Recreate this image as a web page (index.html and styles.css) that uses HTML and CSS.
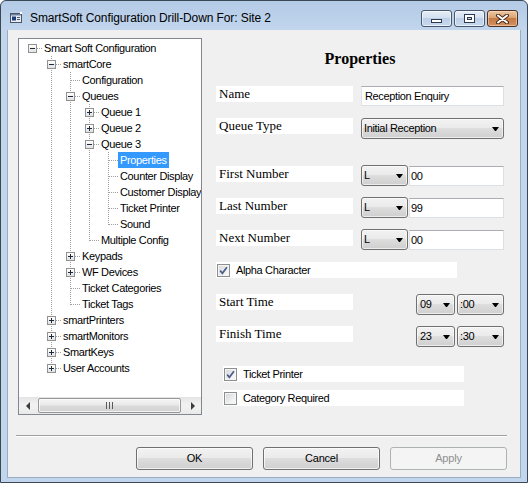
FILE: index.html
```html
<!DOCTYPE html>
<html>
<head>
<meta charset="utf-8">
<title>SmartSoft Configuration</title>
<link rel="stylesheet" href="styles.css">
</head>
<body>
<div class="window">
  <div class="titlebar">
    <svg class="appicon" width="16" height="16" viewBox="0 0 16 16">
      <rect x="2.5" y="3.5" width="11" height="9" fill="#e9eef5" stroke="#4a5568"/>
      <rect x="3" y="4" width="10" height="1.5" fill="#6d7f9c"/>
      <rect x="4" y="6.5" width="4" height="4" fill="#1f3c7a"/>
      <rect x="9" y="7" width="3" height="1" fill="#4a5568"/>
      <rect x="9" y="9" width="3" height="1" fill="#4a5568"/>
      <rect x="12" y="2" width="2" height="2" fill="#ffffff"/>
    </svg>
    <span class="title">SmartSoft Configuration Drill-Down For: Site 2</span>
    <div class="capbtns">
      <div class="capbtn"><span class="ico-min"></span></div>
      <div class="capbtn"><span class="ico-max"></span></div>
      <div class="capbtn close">
        <svg width="15" height="10" viewBox="0 0 15 10">
          <path d="M3 1.5 L12 8.5 M12 1.5 L3 8.5" stroke="#4a2a18" stroke-width="4" stroke-linecap="round"/>
          <path d="M3 1.5 L12 8.5 M12 1.5 L3 8.5" stroke="#ffffff" stroke-width="2" stroke-linecap="round"/>
        </svg>
      </div>
    </div>
  </div>

  <div class="client">
    <div class="main">
      <div class="tree">
        <div class="nodes">
          <div class="row"><span class="cell root"><span class="box minus"></span></span><span class="lbl">Smart Soft Configuration</span></div>
          <div class="row"><span class="cell"></span><span class="cell tee"><span class="box minus"></span></span><span class="lbl">smartCore</span></div>
          <div class="row"><span class="cell"></span><span class="cell line"></span><span class="cell tee"></span><span class="lbl">Configuration</span></div>
          <div class="row"><span class="cell"></span><span class="cell line"></span><span class="cell tee"><span class="box minus"></span></span><span class="lbl">Queues</span></div>
          <div class="row"><span class="cell"></span><span class="cell line"></span><span class="cell line"></span><span class="cell tee"><span class="box plus"></span></span><span class="lbl">Queue 1</span></div>
          <div class="row"><span class="cell"></span><span class="cell line"></span><span class="cell line"></span><span class="cell tee"><span class="box plus"></span></span><span class="lbl">Queue 2</span></div>
          <div class="row"><span class="cell"></span><span class="cell line"></span><span class="cell line"></span><span class="cell tee"><span class="box minus"></span></span><span class="lbl">Queue 3</span></div>
          <div class="row"><span class="cell"></span><span class="cell line"></span><span class="cell line"></span><span class="cell line"></span><span class="cell tee"></span><span class="lbl selected">Properties</span></div>
          <div class="row"><span class="cell"></span><span class="cell line"></span><span class="cell line"></span><span class="cell line"></span><span class="cell tee"></span><span class="lbl">Counter Display</span></div>
          <div class="row"><span class="cell"></span><span class="cell line"></span><span class="cell line"></span><span class="cell line"></span><span class="cell tee"></span><span class="lbl">Customer Display</span></div>
          <div class="row"><span class="cell"></span><span class="cell line"></span><span class="cell line"></span><span class="cell line"></span><span class="cell tee"></span><span class="lbl">Ticket Printer</span></div>
          <div class="row"><span class="cell"></span><span class="cell line"></span><span class="cell line"></span><span class="cell line"></span><span class="cell elbow"></span><span class="lbl">Sound</span></div>
          <div class="row"><span class="cell"></span><span class="cell line"></span><span class="cell line"></span><span class="cell elbow"></span><span class="lbl">Multiple Config</span></div>
          <div class="row"><span class="cell"></span><span class="cell line"></span><span class="cell tee"><span class="box plus"></span></span><span class="lbl">Keypads</span></div>
          <div class="row"><span class="cell"></span><span class="cell line"></span><span class="cell tee"><span class="box plus"></span></span><span class="lbl">WF Devices</span></div>
          <div class="row"><span class="cell"></span><span class="cell line"></span><span class="cell tee"></span><span class="lbl">Ticket Categories</span></div>
          <div class="row"><span class="cell"></span><span class="cell line"></span><span class="cell elbow"></span><span class="lbl">Ticket Tags</span></div>
          <div class="row"><span class="cell"></span><span class="cell tee"><span class="box plus"></span></span><span class="lbl">smartPrinters</span></div>
          <div class="row"><span class="cell"></span><span class="cell tee"><span class="box plus"></span></span><span class="lbl">smartMonitors</span></div>
          <div class="row"><span class="cell"></span><span class="cell tee"><span class="box plus"></span></span><span class="lbl">SmartKeys</span></div>
          <div class="row"><span class="cell"></span><span class="cell elbow"><span class="box plus"></span></span><span class="lbl">User Accounts</span></div>
        </div>
        <div class="hscroll">
          <span class="sbtn"><span class="arr-left"></span></span>
          <span class="track"><span class="thumb"><span class="grip"></span></span></span>
          <span class="sbtn"><span class="arr-right"></span></span>
        </div>
      </div>

      <div class="panel">
        <div class="ptitle">Properties</div>

        <div class="frow r-name">
          <span class="flabel">Name</span>
          <span class="tbox wide">Reception Enquiry</span>
        </div>
        <div class="frow r-qtype">
          <span class="flabel">Queue Type</span>
          <span class="combo wide"><span class="ctext">Initial Reception</span><i class="arrow"></i></span>
        </div>
        <div class="frow r-num r-first">
          <span class="flabel">First Number</span>
          <span class="combo pre"><span class="ctext">L</span><i class="arrow"></i></span>
          <span class="tbox num">00</span>
        </div>
        <div class="frow r-num r-next1">
          <span class="flabel">Last Number</span>
          <span class="combo pre"><span class="ctext">L</span><i class="arrow"></i></span>
          <span class="tbox num">99</span>
        </div>
        <div class="frow r-num r-next1">
          <span class="flabel">Next Number</span>
          <span class="combo pre"><span class="ctext">L</span><i class="arrow"></i></span>
          <span class="tbox num">00</span>
        </div>
        <div class="check r-alpha">
          <span class="cbox"><svg width="11" height="11" viewBox="0 0 11 11"><path d="M2.2 5.6 L4.4 8.3 L8.9 2.2" fill="none" stroke="#4b5f8a" stroke-width="1.7"/></svg></span>
          <span class="ctxt">Alpha Character</span>
        </div>
        <div class="frow r-start">
          <span class="flabel">Start Time</span>
          <span class="combo hr"><span class="ctext">09</span><i class="arrow"></i></span>
          <span class="combo mn"><span class="ctext">:00</span><i class="arrow"></i></span>
        </div>
        <div class="frow r-next1">
          <span class="flabel">Finish Time</span>
          <span class="combo hr"><span class="ctext">23</span><i class="arrow"></i></span>
          <span class="combo mn"><span class="ctext">:30</span><i class="arrow"></i></span>
        </div>
        <div class="check r-ticket">
          <span class="cbox"><svg width="11" height="11" viewBox="0 0 11 11"><path d="M2.2 5.6 L4.4 8.3 L8.9 2.2" fill="none" stroke="#4b5f8a" stroke-width="1.7"/></svg></span>
          <span class="ctxt">Ticket Printer</span>
        </div>
        <div class="check r-cat">
          <span class="cbox"></span>
          <span class="ctxt">Category Required</span>
        </div>
      </div>
    </div>

    <div class="sep"></div>

    <div class="buttons">
      <span class="btn">OK</span>
      <span class="btn">Cancel</span>
      <span class="btn disabled">Apply</span>
    </div>
  </div>
</div>
</body>
</html>
```

FILE: styles.css
```css
html, body {
  margin: 0;
  padding: 0;
  background: #ffffff;
}
body {
  width: 528px;
  height: 483px;
  overflow: hidden;
  font-family: "Liberation Sans", Arial, sans-serif;
  font-size: 11px;
  color: #000;
}

/* ---------- window frame ---------- */
.window {
  width: 528px;
  height: 483px;
  box-sizing: border-box;
  border: 1px solid #3b4656;
  border-radius: 6px 6px 0 0;
  background: linear-gradient(#b4cbe6, #c1d5ed 29px, #c1d5ed);
  display: flex;
  flex-direction: column;
  overflow: hidden;
}
.titlebar {
  height: 29px;
  flex: none;
  display: flex;
  align-items: flex-start;
  padding: 0 9px 0 7px;
}
.appicon {
  margin-top: 9px;
  flex: none;
}
.title {
  margin-left: 6px;
  margin-top: 10px;
  font-size: 12px;
  line-height: 15px;
  letter-spacing: -0.1px;
  white-space: nowrap;
}
.capbtns {
  margin-left: auto;
  margin-top: 9px;
  display: flex;
  gap: 2px;
}
.capbtn {
  width: 31px;
  height: 17px;
  box-sizing: border-box;
  border: 1px solid #4a586c;
  border-radius: 3px;
  background: linear-gradient(#e6eef8, #d3e0f0 45%, #bccfe7 50%, #c9daef);
  box-shadow: inset 0 0 0 1px rgba(255,255,255,0.55);
  display: flex;
  align-items: center;
  justify-content: center;
}
.capbtn.close {
  border-color: #4f2f20;
  background: linear-gradient(#ebc8a6, #dba271 45%, #c47a45 50%, #d39160);
  box-shadow: inset 0 0 0 1px rgba(255,230,200,0.5);
}
.ico-min {
  width: 11px;
  height: 4px;
  box-sizing: border-box;
  border: 1px solid #2d3a4d;
  background: #fff;
  align-self: flex-end;
  margin-bottom: 3px;
}
.ico-max {
  width: 11px;
  height: 9px;
  box-sizing: border-box;
  border: 1px solid #2d3a4d;
  background:
    linear-gradient(#c8d8ec, #c8d8ec) center / 3px 1px no-repeat,
    linear-gradient(#2d3a4d, #2d3a4d) center / 5px 3px no-repeat,
    #fff;
}

/* ---------- client ---------- */
.client {
  flex: 1;
  margin: 0 6px 4px 6px;
  border: 1px solid #98acc4;
  border-top: 0;
  background: #f0f0f0;
  display: flex;
  flex-direction: column;
}
.main {
  display: flex;
  align-items: flex-start;
  padding: 8px 0 0 10px;
}

/* ---------- tree ---------- */
.tree {
  width: 184px;
  height: 377px;
  box-sizing: border-box;
  border: 1px solid #828790;
  background: #fff;
  display: flex;
  flex-direction: column;
  flex: none;
}
.nodes {
  flex: 1;
  overflow: hidden;
  padding: 1px 0 0 4px;
  letter-spacing: -0.35px;
}
.row {
  display: flex;
  height: 16px;
  white-space: nowrap;
}
.cell {
  --dv: repeating-linear-gradient(#a0a0a0 0 1px, transparent 1px 2px);
  --dh: repeating-linear-gradient(90deg, #a0a0a0 0 1px, transparent 1px 2px);
  width: 19px;
  height: 16px;
  flex: none;
  display: flex;
  align-items: center;
  justify-content: center;
}
.cell.line {
  background: var(--dv) 9px 0 / 1px 16px no-repeat;
}
.cell.tee {
  background: var(--dh) 10px 8px / 9px 1px no-repeat, var(--dv) 9px 0 / 1px 16px no-repeat;
}
.cell.elbow {
  background: var(--dh) 10px 8px / 9px 1px no-repeat, var(--dv) 9px 0 / 1px 9px no-repeat;
}
.cell.root {
  background: var(--dh) 10px 8px / 9px 1px no-repeat;
}
.box {
  width: 9px;
  height: 9px;
  box-sizing: border-box;
  border: 1px solid #919191;
  margin-left: -1px;
}
.box.minus {
  background:
    linear-gradient(#1e2a3c, #1e2a3c) center / 5px 1px no-repeat,
    linear-gradient(#ffffff, #e2e2e2);
}
.box.plus {
  background:
    linear-gradient(#1e2a3c, #1e2a3c) center / 5px 1px no-repeat,
    linear-gradient(#1e2a3c, #1e2a3c) center / 1px 5px no-repeat,
    linear-gradient(#ffffff, #e2e2e2);
}
.lbl {
  padding: 0 2px;
  line-height: 16px;
  height: 16px;
}
.lbl.selected {
  background: #3399ff;
  color: #fff;
}

/* horizontal scrollbar */
.hscroll {
  height: 17px;
  flex: none;
  display: flex;
  background: linear-gradient(#e4e4e4, #f1f1f1 40%, #f1f1f1 60%, #e9e9e9);
}
.sbtn {
  width: 17px;
  flex: none;
  display: flex;
  align-items: center;
  justify-content: center;
}
.arr-left {
  width: 0;
  height: 0;
  border-top: 4px solid transparent;
  border-bottom: 4px solid transparent;
  border-right: 4px solid #3c3c3c;
}
.arr-right {
  width: 0;
  height: 0;
  border-top: 4px solid transparent;
  border-bottom: 4px solid transparent;
  border-left: 4px solid #3c3c3c;
}
.track {
  flex: 1;
  display: flex;
  padding: 0 3px 0 2px;
}
.thumb {
  flex: 1;
  margin: 1px 0;
  box-sizing: border-box;
  border: 1px solid #979797;
  border-radius: 2px;
  background: linear-gradient(#f5f5f5, #e9e9e9 45%, #dadada 55%, #d2d2d2);
  box-shadow: inset 0 0 0 1px rgba(255,255,255,0.7);
  display: flex;
  align-items: center;
  justify-content: center;
}
.grip {
  width: 7px;
  height: 7px;
  background: repeating-linear-gradient(90deg, #5a5a5a 0 1px, transparent 1px 3px);
}

/* ---------- right panel ---------- */
.panel {
  margin-left: 14px;
  width: 288px;
  flex: none;
  display: flex;
  flex-direction: column;
}
.ptitle {
  margin-top: 12px;
  height: 18px;
  font: bold 16px/18px "Liberation Serif", "Times New Roman", serif;
  text-align: center;
}
.frow {
  display: flex;
  align-items: flex-start;
}
.flabel {
  width: 137px;
  height: 16px;
  flex: none;
  background: #fff;
  font: 13px/15px "Liberation Serif", "Times New Roman", serif;
  padding-left: 3px;
  box-sizing: border-box;
}
.r-name { margin-top: 18px; }
.r-qtype { margin-top: 12px; }
.r-first { margin-top: 26px; }
.r-next1 { margin-top: 11px; }
.r-num .flabel { margin-top: 1px; }
.r-alpha { margin-top: 12px; }
.r-start { margin-top: 16px; }
.r-ticket { margin-top: 19px; margin-left: 7px; }
.r-cat { margin-top: 8px; margin-left: 7px; }

.tbox {
  height: 20px;
  box-sizing: border-box;
  border: 1px solid #dbdfe6;
  border-top-color: #abadb3;
  border-left-color: #e2e3ea;
  background: #fff;
  line-height: 18px;
  padding-left: 3px;
  letter-spacing: -0.35px;
  white-space: nowrap;
}
.tbox.wide { width: 143px; margin-left: 8px; }
.tbox.num { width: 95px; margin-left: 1px; padding-left: 1px; margin-top: 1px; }

.combo {
  height: 21px;
  box-sizing: border-box;
  border: 1px solid #707070;
  border-radius: 3px;
  background: linear-gradient(#f2f2f2, #ebebeb 45%, #dddddd 50%, #cfcfcf);
  box-shadow: inset 0 0 0 1px rgba(255,255,255,0.6);
  display: flex;
  align-items: center;
  padding: 0 4px 0 2px;
  letter-spacing: -0.35px;
  white-space: nowrap;
}
.ctext {
  flex: 1;
  line-height: 19px;
}
.arrow {
  width: 1px;
  height: 0;
  border-left: 3px solid transparent;
  border-right: 3px solid transparent;
  border-top: 4px solid #000;
  flex: none;
}
.combo.wide { width: 143px; margin-left: 8px; }
.combo.pre { width: 47px; margin-left: 8px; }
.combo.hr { width: 39px; margin-left: auto; padding-left: 3px; }
.combo.mn { width: 47px; margin-left: 2px; }

.check {
  width: 241px;
  height: 16px;
  background: #fff;
  display: flex;
  align-items: center;
}
.cbox {
  width: 13px;
  height: 13px;
  box-sizing: border-box;
  border: 1px solid #8e8f8f;
  background: linear-gradient(135deg, #d3d6db, #f3f3f3 70%, #fbfbfb);
  box-shadow: inset 0 0 0 1px #f4f4f4;
  margin-left: 1px;
  flex: none;
  display: flex;
}
.ctxt {
  margin-left: 6px;
  letter-spacing: -0.35px;
  line-height: 16px;
  white-space: nowrap;
}

/* ---------- bottom ---------- */
.sep {
  margin: 20px 13px 0 8px;
  height: 0;
  border-top: 1px solid #a0a0a0;
  border-bottom: 1px solid #ffffff;
}
.buttons {
  display: flex;
  justify-content: flex-end;
  gap: 10px;
  margin-top: 10px;
  padding-right: 13px;
}
.btn {
  width: 117px;
  height: 23px;
  box-sizing: border-box;
  border: 1px solid #707070;
  border-radius: 3px;
  background: linear-gradient(#f2f2f2, #ebebeb 45%, #dddddd 50%, #cfcfcf);
  box-shadow: inset 0 0 0 1px rgba(255,255,255,0.7);
  text-align: center;
  line-height: 21px;
  letter-spacing: -0.2px;
}
.btn.disabled {
  border-color: #adb2b5;
  background: #f4f4f4;
  box-shadow: none;
  color: #8f8f8f;
}
```
